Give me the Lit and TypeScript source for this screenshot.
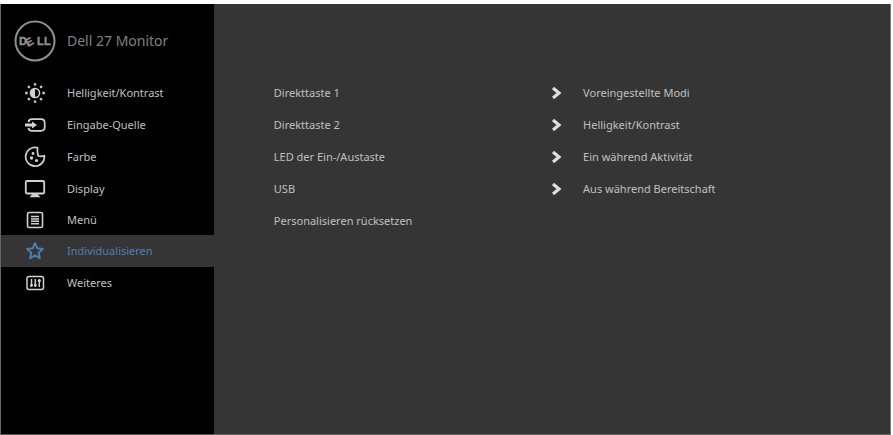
import { LitElement, html, css, svg, nothing } from "lit";
import { customElement, state } from "lit/decorators.js";
import { classMap } from "lit/directives/class-map.js";

const icons = {
  brightness: svg`
    <circle cx="11" cy="11" r="4.6" fill="none" stroke="currentColor" stroke-width="1.5"/>
    <path d="M11 6.4a4.6 4.6 0 0 0 0 9.2z" fill="currentColor"/>
    <path d="M11 1.2v2.4M11 18.4v2.4M1.2 11h2.4M18.4 11h2.4M4.1 4.1l1.6 1.6M16.3 16.3l1.6 1.6M4.1 17.9l1.6-1.6M16.3 5.7l1.6-1.6" stroke="currentColor" stroke-width="2.3"/>`,
  input: svg`
    <path d="M4.5 8.2C4.7 6 5.8 5.2 8 5.2h9c2.6 0 3.7 1.1 3.7 3.5v4.6c0 2.4-1.1 3.5-3.7 3.5H8c-2.2 0-3.3-.8-3.5-3" fill="none" stroke="currentColor" stroke-width="1.7"/>
    <path d="M1 9.6h7V7.4l5 3.6-5 3.6v-2.2H1z" fill="currentColor"/>`,
  color: svg`
    <path d="M13.6 1.7A9.4 9.4 0 1 0 20.4 9.8c-2.2.6-4.4.6-6 .2-.9-1.8-1.2-4.8-.8-8.3z" fill="none" stroke="currentColor" stroke-width="1.7" stroke-linejoin="round"/>
    <circle cx="9" cy="7.5" r="1.4" fill="currentColor"/>
    <circle cx="7.5" cy="12" r="1.7" fill="currentColor"/>
    <circle cx="12.5" cy="14.5" r="1.6" fill="currentColor"/>`,
  display: svg`
    <rect x="1.8" y="3" width="18.4" height="12.5" rx="1.2" fill="none" stroke="currentColor" stroke-width="1.8"/>
    <path d="M9 15.5h4l3.500 3.800H5.500z" fill="currentColor"/>`,
  menu: svg`
    <rect x="3.5" y="3.5" width="15" height="15" rx="1.5" fill="none" stroke="currentColor" stroke-width="1.6"/>
    <path d="M7 7.5h8M7 9.9h8M7 12.3h8M7 14.7h8" stroke="currentColor" stroke-width="1.5"/>`,
  star: svg`
    <path d="M11 3.2l2.3 5.1 5.6.6-4.2 3.8 1.2 5.5L11 15.4l-4.9 2.800 1.200-5.500-4.200-3.800 5.600-.6z" fill="none" stroke="currentColor" stroke-width="1.9" stroke-linejoin="round"/>`,
  more: svg`
    <rect x="3" y="4.5" width="16.5" height="13" rx="2" fill="none" stroke="currentColor" stroke-width="1.5"/>
    <path d="M7.5 7v8M11.3 7v8M15.3 7v8" stroke="currentColor" stroke-width="1.5"/>
    <path d="M6.2 12.3h2.600v2H6.200zM10 12.300h2.600v2H10zM13.800 7.800h3v2h-3z" fill="currentColor"/>`,
};

type IconName = keyof typeof icons;

const sections: { icon: IconName; label: string; compact?: boolean }[] = [
  { icon: "brightness", label: "Helligkeit/Kontrast" },
  { icon: "input", label: "Eingabe-Quelle" },
  { icon: "color", label: "Farbe" },
  { icon: "display", label: "Display" },
  { icon: "menu", label: "Menü", compact: true },
  { icon: "star", label: "Individualisieren" },
  { icon: "more", label: "Weiteres" },
];

const options: { label: string; value?: string }[] = [
  { label: "Direkttaste 1", value: "Voreingestellte Modi" },
  { label: "Direkttaste 2", value: "Helligkeit/Kontrast" },
  { label: "LED der Ein-/Austaste", value: "Ein während Aktivität" },
  { label: "USB", value: "Aus während Bereitschaft" },
  { label: "Personalisieren rücksetzen" },
];

@customElement("app-root")
export class AppRoot extends LitElement {
  @state() private active = "Individualisieren";

  static styles = css`
    :host {
      display: block;
      background: #fff;
      color: #c0c0c0;
      font: 11px/16px "Noto Sans", "Open Sans", sans-serif;
    }
    * { box-sizing: border-box; }
    .osd {
      display: grid;
      grid-template-columns: 24% 1fr;
      min-height: 100vh;
      border: solid #fff;
      border-width: 4px 2px 0 0;
      background: #353535;
    }
    .sidebar {
      background: #000;
      border-left: 1px solid #666;
      border-bottom: 1px solid #555;
    }
    .brand {
      display: flex;
      align-items: center;
      gap: 11px;
      height: 73px;
      padding: 0 0 0 13px;
      color: #808080;
    }
    .logo { width: 42px; height: 42px; color: #909090; }
    .title { margin: 0; font-size: 14px; font-weight: 400; }
    .wordmark { font: 700 11px "Liberation Sans", sans-serif; }
    button {
      width: 100%;
      height: 32px;
      padding: 0;
      border: 0;
      background: none;
      color: inherit;
      font: inherit;
      text-align: left;
      cursor: pointer;
    }
    .item {
      display: grid;
      grid-template-columns: 32px 1fr;
      align-items: center;
      padding-left: 23px;
      column-gap: 11px;
    }
    .item.compact { height: 30px; }
    .item.active { background: #353535; color: #4f80b4; }
    .icon { width: 22px; height: 22px; color: #d2d2d2; }
    .active .icon { color: #4f80b4; }
    .panel {
      padding: 73px 0 0 60px;
      border-bottom: 1px solid #666;
      border-right: 1px solid #777;
    }
    .option {
      display: grid;
      grid-template-columns: 45% 32px 1fr;
      align-items: center;
    }
    .chevron { width: 12px; height: 14px; color: #dedede; }
  `;

  render() {
    return html`
      <div class="osd">
        <nav class="sidebar" aria-label="Hauptmenü">
          <header class="brand">
            <svg class="logo" viewBox="0 0 42 42" aria-hidden="true">
              <circle cx="21" cy="21" r="19.5" fill="none" stroke="currentColor" stroke-width="2"/>
              <text class="wordmark" x="5 14 23 30" y="25 27 25 25" rotate="0 -30 0 0" fill="currentColor" stroke="currentColor" stroke-width="0.4">DELL</text>
            </svg>
            <h1 class="title">Dell 27 Monitor</h1>
          </header>
          ${sections.map((s) => html`
            <button
              class=${classMap({ item: true, compact: !!s.compact, active: s.label === this.active })}
              aria-current=${s.label === this.active ? "page" : nothing}
              @click=${() => (this.active = s.label)}
            >
              <svg class="icon" viewBox="0 0 22 22" aria-hidden="true">${icons[s.icon]}</svg>
              <span>${s.label}</span>
            </button>`)}
        </nav>
        <main class="panel">
          ${options.map((o) => html`
            <button class="option">
              <span>${o.label}</span>
              ${o.value
                ? html`
                  <svg class="chevron" viewBox="0 0 12 14" aria-hidden="true">
                    <path d="M2 2l6 5-6 5" fill="none" stroke="currentColor" stroke-width="3.2"/>
                  </svg>
                  <span>${o.value}</span>`
                : nothing}
            </button>`)}
        </main>
      </div>`;
  }
}
